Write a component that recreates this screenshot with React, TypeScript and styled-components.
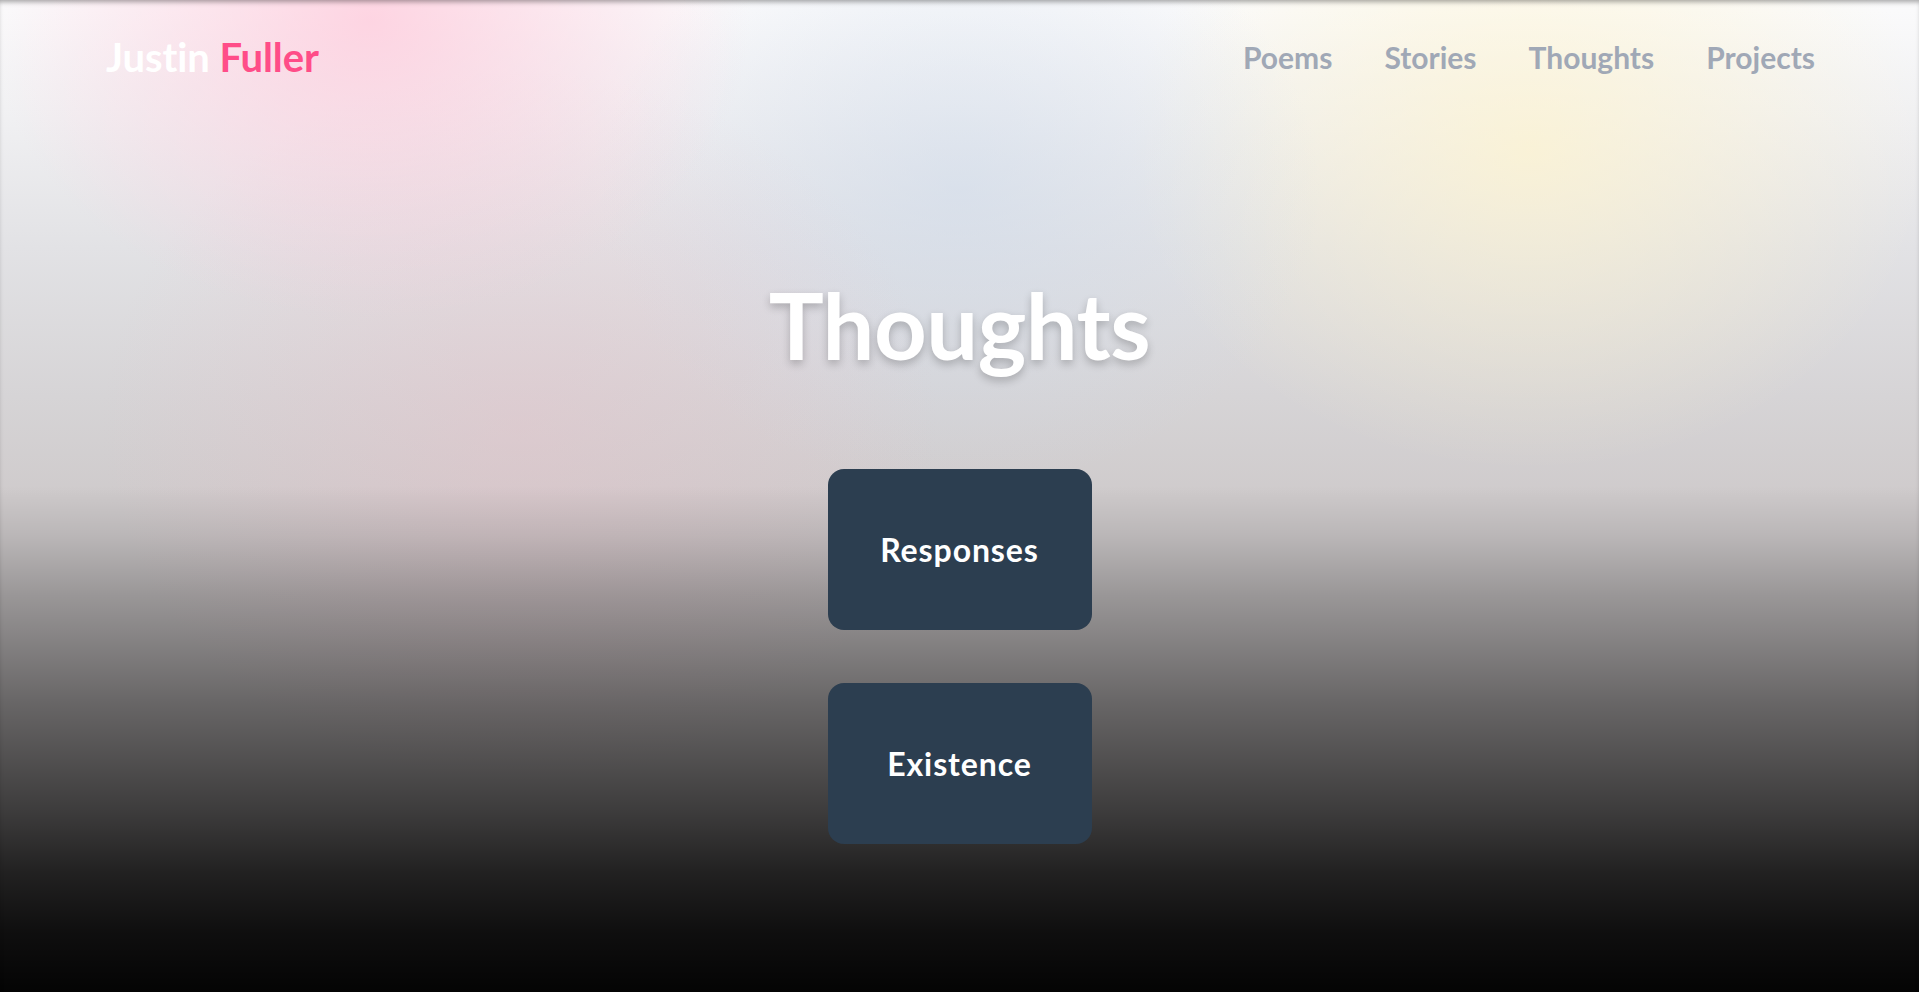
import React from "react";
import styled, { createGlobalStyle } from "styled-components";

const GlobalStyle = createGlobalStyle`
  html, body {
    margin: 0;
    padding: 0;
  }
  body {
    font-family: "Lato", "Noto Sans", sans-serif;
    -webkit-font-smoothing: antialiased;
  }
  * { box-sizing: border-box; }
`;

const Page = styled.div`
  min-height: 992px;
  display: flex;
  flex-direction: column;
  box-shadow: inset 0 4px 5px -2px rgba(0, 0, 0, 0.35);
  background:
    linear-gradient(
      to bottom,
      rgba(0, 0, 0, 0) 49%,
      rgba(0, 0, 0, 0.1) 54%,
      rgba(0, 0, 0, 0.26) 60%,
      rgba(0, 0, 0, 0.5) 71%,
      rgba(0, 0, 0, 0.71) 82%,
      rgba(0, 0, 0, 0.84) 88%,
      rgba(0, 0, 0, 0.93) 94%,
      rgba(0, 0, 0, 0.98) 100%
    ),
    radial-gradient(ellipse 380px 300px at 370px 20px, rgba(255, 200, 218, 0.75), rgba(255, 200, 218, 0) 100%),
    radial-gradient(ellipse 420px 360px at 520px 430px, rgba(235, 190, 200, 0.35), rgba(235, 190, 200, 0) 100%),
    radial-gradient(ellipse 360px 300px at 960px 190px, rgba(205, 218, 235, 0.55), rgba(205, 218, 235, 0) 100%),
    radial-gradient(ellipse 400px 320px at 1530px 150px, rgba(255, 244, 205, 0.7), rgba(255, 244, 205, 0) 100%),
    linear-gradient(to bottom, #fbfbfc 0%, #f0f0f2 12%, #e2e2e5 25%, #d6d4d6 40%, #cfcbcc 50%, #cfcbcc 100%);
`;

const Header = styled.header`
  height: 114px;
  padding: 0 104px 0 106px;
  display: flex;
  align-items: center;
  justify-content: space-between;
`;

const Logo = styled.a`
  font-size: 40px;
  font-weight: 700;
  color: #ffffff;
  text-decoration: none;
  letter-spacing: -0.1px;
`;

const LogoAccent = styled.span`
  color: #ff4d88;
`;

const Nav = styled.nav`
  display: flex;
  align-items: center;
  gap: 52px;
`;

const NavLink = styled.a`
  font-size: 30px;
  font-weight: 700;
  color: #a0a8b6;
  text-decoration: none;
`;

const Main = styled.main`
  display: flex;
  flex-direction: column;
  align-items: center;
  padding-top: 156px;
`;

const Title = styled.h1`
  margin: 0;
  font-size: 92px;
  line-height: 110px;
  font-weight: 700;
  color: #ffffff;
  text-shadow: 0 4px 8px rgba(0, 0, 0, 0.22);
  letter-spacing: -0.5px;
`;

const CardList = styled.div`
  margin-top: 89px;
  display: flex;
  flex-direction: column;
  gap: 53px;
`;

const Card = styled.a`
  width: 264px;
  height: 161px;
  border-radius: 16px;
  background: #2c3e50;
  display: flex;
  align-items: center;
  justify-content: center;
  color: #ffffff;
  font-size: 32px;
  font-weight: 700;
  letter-spacing: 0.9px;
  text-decoration: none;
`;

const navItems = ["Poems", "Stories", "Thoughts", "Projects"];
const cards = ["Responses", "Existence"];

export default function App() {
  return (
    <>
      <GlobalStyle />
      <Page>
        <Header>
          <Logo href="#">
            Justin <LogoAccent>Fuller</LogoAccent>
          </Logo>
          <Nav>
            {navItems.map((item) => (
              <NavLink key={item} href="#">
                {item}
              </NavLink>
            ))}
          </Nav>
        </Header>
        <Main>
          <Title>Thoughts</Title>
          <CardList>
            {cards.map((c) => (
              <Card key={c} href="#">
                {c}
              </Card>
            ))}
          </CardList>
        </Main>
      </Page>
    </>
  );
}
